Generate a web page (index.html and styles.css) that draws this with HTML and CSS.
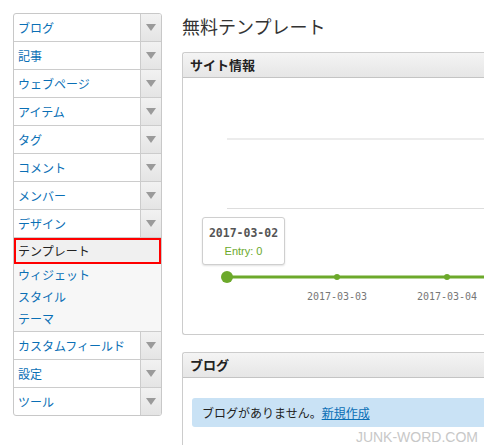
FILE: index.html
```html
<!DOCTYPE html>
<html lang="ja">
<head>
<meta charset="utf-8">
<link rel="stylesheet" href="styles.css">
</head>
<body>
<div class="page">
  <nav class="menu">
    <div class="row"><span class="label">ブログ</span><span class="arrow"></span></div>
    <div class="row"><span class="label">記事</span><span class="arrow"></span></div>
    <div class="row"><span class="label">ウェブページ</span><span class="arrow"></span></div>
    <div class="row"><span class="label">アイテム</span><span class="arrow"></span></div>
    <div class="row"><span class="label">タグ</span><span class="arrow"></span></div>
    <div class="row"><span class="label">コメント</span><span class="arrow"></span></div>
    <div class="row"><span class="label">メンバー</span><span class="arrow"></span></div>
    <div class="row"><span class="label">デザイン</span><span class="arrow"></span></div>
    <div class="sub">
      <div class="sub-item current">テンプレート</div>
      <div class="sub-item">ウィジェット</div>
      <div class="sub-item">スタイル</div>
      <div class="sub-item">テーマ</div>
    </div>
    <div class="row"><span class="label">カスタムフィールド</span><span class="arrow"></span></div>
    <div class="row"><span class="label">設定</span><span class="arrow"></span></div>
    <div class="row last"><span class="label">ツール</span><span class="arrow"></span></div>
  </nav>
  <main class="main">
    <h1 class="title">無料テンプレート</h1>
    <section class="panel">
      <div class="panel-head">サイト情報</div>
      <div class="chart">
        <svg class="chart-svg" width="340" height="256" viewBox="0 0 340 256">
          <line x1="44" y1="61" x2="340" y2="61" stroke="#ececec" stroke-width="2"/>
          <line x1="44" y1="130.5" x2="340" y2="130.5" stroke="#dddddd" stroke-width="1"/>
          <line x1="44" y1="199" x2="340" y2="199" stroke="#6ca92b" stroke-width="3"/>
          <circle cx="44" cy="199" r="6" fill="#6ca92b"/>
          <circle cx="154" cy="199" r="3" fill="#6ca92b"/>
          <circle cx="264" cy="199" r="3" fill="#6ca92b"/>
          <text x="154" y="222" class="axis" text-anchor="middle">2017-03-03</text>
          <text x="264" y="222" class="axis" text-anchor="middle">2017-03-04</text>
        </svg>
        <div class="tip">
          <div class="tip-date">2017-03-02</div>
          <div class="tip-val">Entry: 0</div>
        </div>
      </div>
    </section>
    <section class="panel blog">
      <div class="panel-head">ブログ</div>
      <div class="panel-body">
        <div class="alert">ブログがありません。<a href="#" class="link">新規作成</a></div>
      </div>
    </section>
  </main>
</div>
<div class="watermark">JUNK-WORD.COM</div>
</body>
</html>
```

FILE: styles.css
```css
html, body {
  margin: 0;
  padding: 0;
  background: #fff;
  overflow: hidden;
  width: 484px;
  height: 445px;
}
body {
  font-family: "Noto Sans CJK JP", "Noto Sans", sans-serif;
  position: relative;
}
.page {
  display: flex;
  align-items: flex-start;
  padding: 13px 0 0 13px;
  height: 432px;
}
.menu {
  width: 147px;
  flex-shrink: 0;
  border: 1px solid #c8c8c8;
  border-radius: 3px;
  overflow: hidden;
  background: #fff;
}
.row {
  display: flex;
  height: 27px;
  border-bottom: 1px solid #cccccc;
}
.row.last { border-bottom: none; }
.label {
  flex: 1;
  padding-left: 4px;
  font-size: 12px;
  line-height: 27px;
  color: #0a6fb5;
}
.arrow {
  width: 20px;
  border-left: 1px solid #cccccc;
  background: linear-gradient(#f2f2f2, #e4e4e4);
  display: flex;
  align-items: center;
  justify-content: center;
}
.arrow::before {
  content: "";
  display: block;
  width: 0;
  height: 0;
  border-left: 5px solid transparent;
  border-right: 5px solid transparent;
  border-top: 7px solid #9a9a9a;
}
.sub {
  background: #f7f7f7;
  border-bottom: 1px solid #cccccc;
  padding-bottom: 1px;
}
.sub-item {
  height: 22px;
  line-height: 22px;
  padding-left: 4px;
  font-size: 12px;
  color: #0a6fb5;
}
.sub-item.current {
  height: 22px;
  line-height: 22px;
  padding-left: 2px;
  border: 2px solid #ff0000;
  background: #f0f0f0;
  color: #222;
}
.main {
  flex: 1;
  min-width: 0;
  height: 432px;
  overflow: hidden;
  margin-left: 20px;
}
.title {
  margin: 0 0 13px 0;
  font-size: 18px;
  line-height: 26px;
  font-weight: 400;
  color: #333;
}
.panel {
  width: 340px;
  border: 1px solid #cccccc;
  border-right: none;
  border-radius: 3px 0 0 3px;
  background: #fff;
}
.panel-head {
  height: 24px;
  line-height: 24px;
  padding-left: 7px;
  font-size: 13px;
  font-weight: 700;
  color: #222;
  background: linear-gradient(#f4f4f4, #e6e6e6);
  border-bottom: 1px solid #c4c4c4;
  border-radius: 3px 0 0 0;
}
.chart {
  position: relative;
  height: 256px;
}
.chart-svg { display: block; }
.axis {
  font-family: "DejaVu Sans Mono", "Liberation Mono", monospace;
  font-size: 10px;
  fill: #777;
}
.tip {
  position: absolute;
  left: 19px;
  top: 139px;
  width: 81px;
  height: 46px;
  border: 1px solid #cfcfcf;
  border-radius: 3px;
  background: #fff;
  box-shadow: 0 1px 2px rgba(0,0,0,0.12);
  text-align: center;
}
.tip-date {
  margin-top: 8px;
  font-family: "DejaVu Sans Mono", "Liberation Mono", monospace;
  font-weight: 700;
  font-size: 11.5px;
  line-height: 14px;
  color: #555;
}
.tip-val {
  margin-top: 4px;
  font-family: "Liberation Sans", sans-serif;
  font-size: 11px;
  line-height: 14px;
  color: #6ca92b;
}
.blog {
  margin-top: 17px;
  height: 120px;
}
.panel-body {
  padding: 20px 0 0 9px;
}
.alert {
  height: 29px;
  line-height: 29px;
  padding-left: 10px;
  background: #c9e2f5;
  border-radius: 3px 0 0 3px;
  font-size: 12px;
  color: #222;
}
.link {
  color: #0a6fb5;
  text-decoration: underline;
}
.watermark {
  position: absolute;
  right: 4px;
  bottom: 1px;
  font-family: "Liberation Sans", sans-serif;
  font-size: 14px;
  line-height: 14px;
  color: #c8c8c8;
  background: #fff;
  padding: 0 2px;
}
```
